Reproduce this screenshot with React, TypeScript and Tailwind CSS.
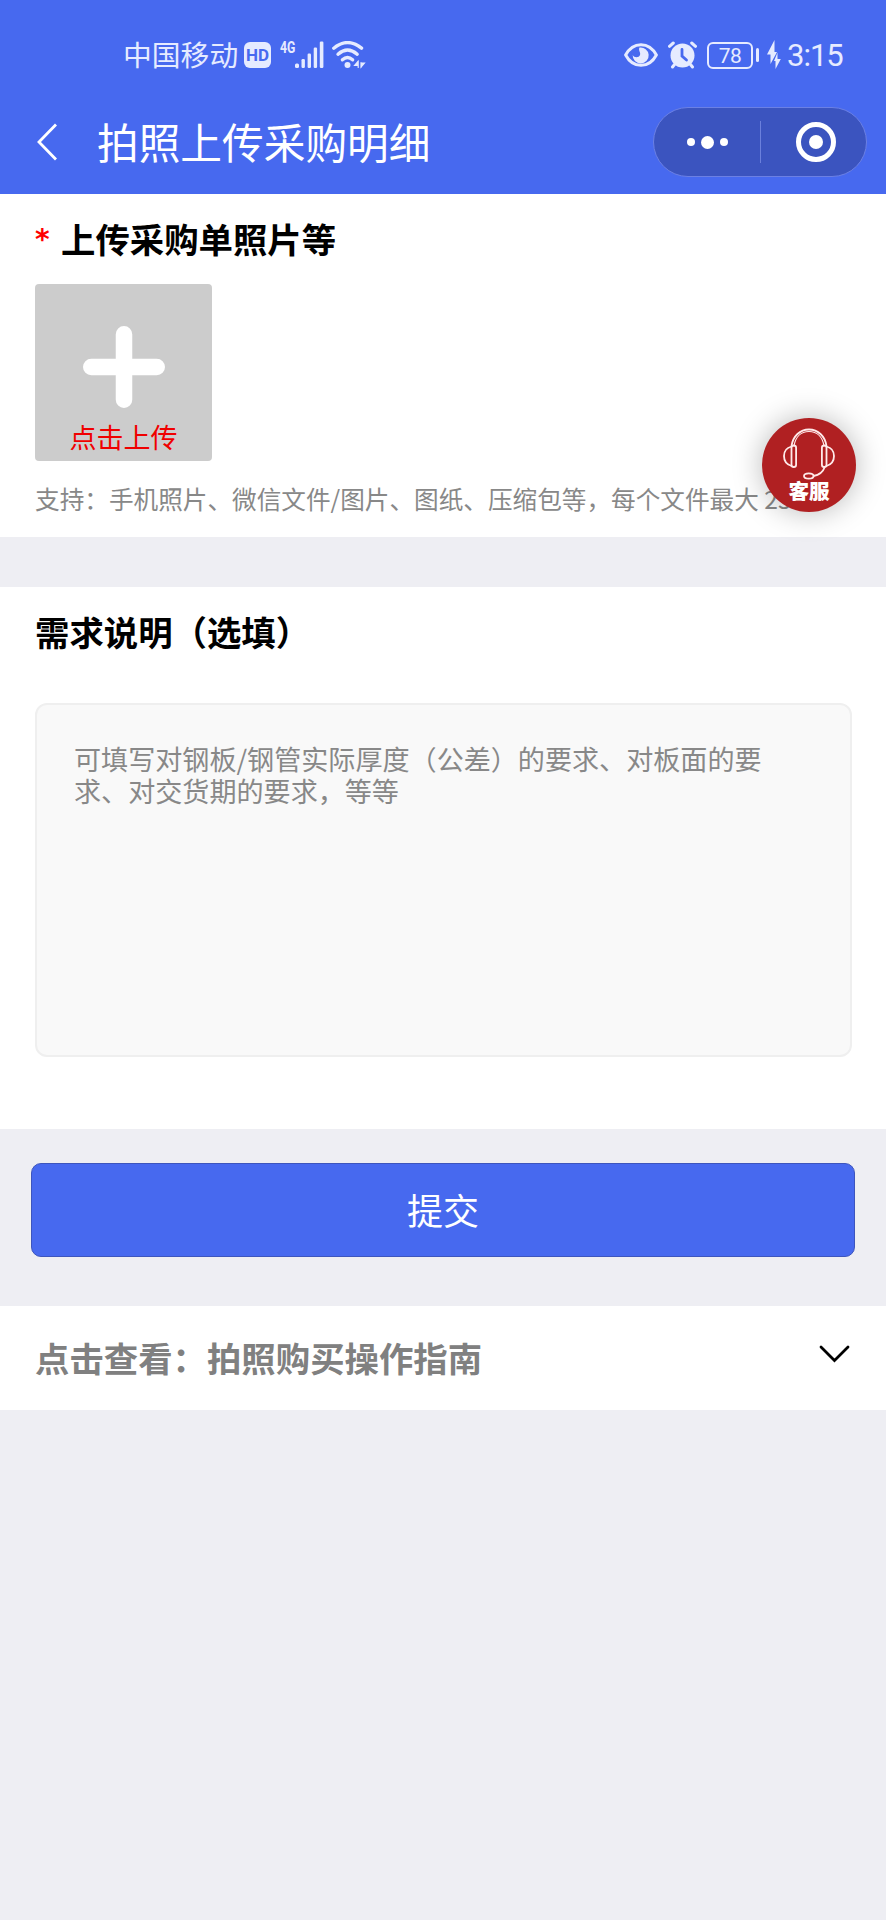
function CarrierStatus() {
  return (
    <div className="flex h-10 items-center">
      <span className="-mt-[2px] w-[121px] whitespace-nowrap text-[28.8px] leading-10">中国移动</span>
      <span className="flex h-[26px] w-[27px] items-center justify-center rounded-[6px] bg-[#e6ebff] font-['Roboto'] text-[17px] font-bold leading-none text-[#4769ef]">
        HD
      </span>
      <span className="ml-[9px] h-[36px] w-[15px] font-['Roboto'] text-[17px] font-bold leading-[20px]">
        <span className="inline-block origin-left scale-x-[0.72]">4G</span>
      </span>
      <svg className="h-7 w-[29px]" viewBox="0 0 29 28" fill="currentColor">
        <rect x="0" y="22.5" width="4" height="4.5" rx="1.5" />
        <rect x="6.5" y="18" width="3.4" height="9" rx="1.2" />
        <rect x="12.6" y="12.5" width="3.4" height="14.5" rx="1.2" />
        <rect x="18.7" y="6.5" width="3.4" height="20.5" rx="1.2" />
        <rect x="24.8" y="0.5" width="3.6" height="26.5" rx="1.2" />
      </svg>
      <svg className="ml-2 h-7 w-[34px]" viewBox="0 0 34 28" fill="none" stroke="currentColor" strokeWidth="3.4" strokeLinecap="round">
        <path d="M1.8 7.2Q15.5-4 29.500 7.2" />
        <path d="M6 13.2Q15.5 5 25.2 13.2" />
        <path d="M10.4 18.8Q15.5 14.4 20.6 18.8" />
        <circle cx="15.5" cy="24" r="3" fill="currentColor" stroke="none" />
        <path d="M26.200 20V26.500M26 20.500L22.600 24.500H26ZM29 26.500V21.500M29 26L32.400 22H29Z" strokeWidth="1.2" fill="currentColor" />
      </svg>
    </div>
  );
}

function DeviceStatus() {
  return (
    <div className="flex h-10 items-center">
      <svg className="h-7 w-[34px]" viewBox="0 0 34 28" fill="none" stroke="currentColor" strokeWidth="3">
        <path d="M1.6 14C9 .2 25 .2 32.4 14C25 27.8 9 27.8 1.6 14Z" strokeLinejoin="round" />
        <path d="M15.5 6.5A8 8 0 1 1 8.7 14C10 17 15 17 16 14C17 11.5 14 9.5 15.5 6.5Z" fill="currentColor" stroke="none" />
      </svg>
      <svg className="ml-[10px] h-7 w-[29px]" viewBox="0 0 29 28" fill="none" stroke="currentColor" strokeLinecap="round">
        <circle cx="14.5" cy="14.5" r="12" fill="currentColor" stroke="none" />
        <path d="M1.5 5.3L5.3 2M27.5 5.3L23.7 2" strokeWidth="3" />
        <path d="M6.5 23.5L4.5 26M22.5 23.5L24.5 26" strokeWidth="3" />
        <path d="M14 8.5V15L18.5 19" stroke="#4769ef" strokeWidth="2.8" />
      </svg>
      <span className="ml-[10px] flex h-[27px] w-[46px] items-center justify-center rounded-[6px] border-[2.5px] border-current pt-[2px] font-['Roboto'] text-[21px] leading-none tracking-[-0.5px]">
        78
      </span>
      <span className="ml-[3px] h-[14px] w-[3px] rounded-full bg-current" />
      <svg className="ml-[8px] h-[30px] w-[14px]" viewBox="0 0 14 30" fill="currentColor">
        <path d="M7.5 0V12H10L3.5 24V14.5H0Z" />
        <path d="M10.5 12.5V19H13.8L8.5 29V21H7Z" />
      </svg>
      <span className="ml-[6px] mt-[2px] w-[56px] whitespace-nowrap font-['Roboto'] text-[31px] leading-10 tracking-[-1px]">3:15</span>
    </div>
  );
}

function Capsule() {
  return (
    <div className="flex h-[70px] w-[214px] items-center rounded-full border-[1.5px] border-[#6b80e4] bg-[#3b54bf] text-white">
      <div className="flex w-[106px] items-center justify-center gap-[6px]">
        <span className="size-[8px] rounded-full bg-white" />
        <span className="size-[13px] rounded-full bg-white" />
        <span className="size-[8px] rounded-full bg-white" />
      </div>
      <span className="h-[42px] w-px bg-[#6b80dc]" />
      <div className="flex flex-1 items-center justify-center pl-[4px]">
        <span className="flex size-[40px] items-center justify-center rounded-full border-[5.5px] border-white">
          <span className="size-[14px] rounded-full bg-white" />
        </span>
      </div>
    </div>
  );
}

function ServiceButton() {
  return (
    <button className="absolute left-[762px] top-[418px] flex size-[94px] flex-col items-center rounded-full bg-[#b02022] pt-[9px] text-white shadow-[0_0_30px_rgba(0,0,0,0.28)]">
      <svg className="h-[54px] w-[54px] shrink-0" viewBox="0 0 54 54" fill="none" stroke="#ffeaea" strokeWidth="1.8" strokeLinecap="round">
        <path d="M9.5 19C11 9 18 2.5 27 2.5S43 9 44.500 19" />
        <path d="M12 19C13.500 10 19 4.500 27 4.500S40.500 10 42 19" strokeWidth="1.2" />
        <rect x="9.500" y="18.500" width="4.600" height="21.500" rx="2.300" />
        <rect x="39.900" y="18.500" width="4.600" height="21.500" rx="2.300" />
        <path d="M9.500 19.500C-.5 22-.5 36 9.500 39M44.500 19.500C54.500 22 54.500 36 44.500 39" />
        <path d="M42.500 40.500C41 45 37 48 31.500 49" />
        <ellipse cx="26.800" cy="49" rx="4.800" ry="2.700" />
      </svg>
      <span className="-mt-[5px] whitespace-nowrap text-[20.6px] font-black leading-[28px]">客服</span>
    </button>
  );
}

export default function App() {
  return (
    <div className="relative flex h-[1920px] w-[886px] flex-col overflow-hidden bg-[#eeeef3] font-['Noto_Sans_CJK_SC',sans-serif]">
      <header className="h-[194px] bg-[#4769ef]">
        <div className="flex h-[107px] items-start justify-between pl-[123px] pr-[43px] pt-[35px] text-[#e6ebff]">
          <CarrierStatus />
          <DeviceStatus />
        </div>
        <div className="flex h-[70px] items-center pl-[37px] pr-[19px] text-white">
          <svg className="h-[38px] w-[20px]" viewBox="0 0 20 38" fill="none" stroke="currentColor" strokeWidth="2.8">
            <path d="M19 1.500L2 19L19 36.500" />
          </svg>
          <h1 className="-mt-[3px] ml-[40px] flex-1 whitespace-nowrap text-[41.7px] leading-[60px]">拍照上传采购明细</h1>
          <Capsule />
        </div>
      </header>

      <section className="h-[343px] bg-white px-[35px] pt-[18px]">
        <h2 className="flex h-[52px] items-center whitespace-nowrap text-[34.4px] font-bold leading-[52px] text-black">
          <span className="w-[26px] pt-[4px] font-['DejaVu_Sans'] text-[28px] text-[#f00]">*</span>上传采购单照片等
        </h2>
        <button className="mt-[20px] flex size-[177px] flex-col items-center rounded-[4px] bg-[#ccc] pt-[42px]">
          <svg className="size-[82px] shrink-0" viewBox="0 0 82 82" stroke="#fff" strokeWidth="16.500" strokeLinecap="round">
            <path d="M41 8.250V73.750M8.250 41H73.750" />
          </svg>
          <span className="mt-[11px] whitespace-nowrap text-[27px] leading-[36px] text-[#f00000]">点击上传</span>
        </button>
        <p className="mt-[19px] whitespace-nowrap text-[24.630px] leading-[36px] text-[#888]">
          支持：手机照片、微信文件/图片、图纸、压缩包等，每个文件最大 25M
        </p>
      </section>

      <section className="mt-[50px] h-[542px] bg-white px-[35px] pt-[18px]">
        <h2 className="whitespace-nowrap text-[34.4px] font-bold leading-[52px] text-black">需求说明（选填）</h2>
        <textarea
          className="mt-[46px] block h-[354px] w-[817px] resize-none rounded-[12px] border-[2.500px] border-[#efefef] bg-[#f9f9f9] px-[37px] pt-[38px] text-[27.080px] leading-[32px] placeholder:text-[#888]"
          placeholder="可填写对钢板/钢管实际厚度（公差）的要求、对板面的要求、对交货期的要求，等等"
        />
      </section>

      <div className="px-[31px] pt-[34px]">
        <button className="flex h-[94px] w-full items-center justify-center rounded-[10px] border border-[#3d55bd] bg-[#4769ef] pb-[3px] text-[36px] leading-none text-white">
          提交
        </button>
      </div>

      <section className="mt-[49px] flex h-[104px] items-center justify-between bg-white pl-[35px] pr-[36px]">
        <h2 className="-mt-[2px] whitespace-nowrap text-[34.4px] font-bold leading-[52px] text-[#808080]">点击查看：拍照购买操作指南</h2>
        <svg className="-mt-[8px] h-[18px] w-[31px]" viewBox="0 0 31 18" fill="none" stroke="#000" strokeWidth="2.800" strokeLinecap="round">
          <path d="M2 2L15.500 15.500L29 2" />
        </svg>
      </section>

      <ServiceButton />
    </div>
  );
}
